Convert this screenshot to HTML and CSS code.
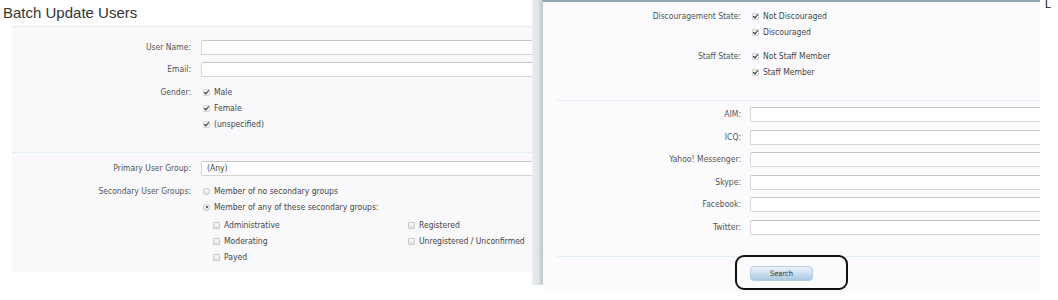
FILE: index.html
```html
<!DOCTYPE html>
<html lang="en">
<head>
  <meta charset="UTF-8">
  <meta name="viewport" content="width=device-width, initial-scale=1.0">
  <title>Batch Update Users</title>
  <link rel="stylesheet" href="styles.css">
</head>
<body>
  <div class="screen">

    <div class="left-pane">
      <h1 class="title">Batch Update Users</h1>

      <div class="section">
        <div class="row">
          <label class="row-label">User Name:</label>
          <div class="controls"><input type="text" class="text-input"></div>
        </div>
        <div class="row">
          <label class="row-label">Email:</label>
          <div class="controls"><input type="text" class="text-input"></div>
        </div>
        <div class="row">
          <div class="row-label opt-label">Gender:</div>
          <div class="controls">
            <div class="opt"><span class="cb checked"></span>Male</div>
            <div class="opt"><span class="cb checked"></span>Female</div>
            <div class="opt"><span class="cb checked"></span>(unspecified)</div>
          </div>
        </div>
      </div>

      <div class="section section-second">
        <div class="row">
          <label class="row-label">Primary User Group:</label>
          <div class="controls"><div class="select-box">(Any)</div></div>
        </div>
        <div class="row">
          <div class="row-label opt-label">Secondary User Groups:</div>
          <div class="controls">
            <div class="opt"><span class="radio"></span>Member of no secondary groups</div>
            <div class="opt"><span class="radio selected"></span>Member of any of these secondary groups:</div>
            <div class="group-grid">
              <div class="opt"><span class="cb"></span>Administrative</div>
              <div class="opt"><span class="cb"></span>Registered</div>
              <div class="opt"><span class="cb"></span>Moderating</div>
              <div class="opt"><span class="cb"></span>Unregistered / Unconfirmed</div>
              <div class="opt"><span class="cb"></span>Payed</div>
            </div>
          </div>
        </div>
      </div>
    </div>

    <div class="pane-bar"></div>

    <div class="right-pane">
      <div class="section-r">
        <div class="row">
          <div class="row-label opt-label">Discouragement State:</div>
          <div class="controls">
            <div class="opt"><span class="cb checked"></span>Not Discouraged</div>
            <div class="opt"><span class="cb checked"></span>Discouraged</div>
          </div>
        </div>
        <div class="row">
          <div class="row-label opt-label">Staff State:</div>
          <div class="controls">
            <div class="opt"><span class="cb checked"></span>Not Staff Member</div>
            <div class="opt"><span class="cb checked"></span>Staff Member</div>
          </div>
        </div>
      </div>

      <div class="section-r section-im">
        <div class="row">
          <label class="row-label">AIM:</label>
          <div class="controls"><input type="text" class="text-input"></div>
        </div>
        <div class="row">
          <label class="row-label">ICQ:</label>
          <div class="controls"><input type="text" class="text-input"></div>
        </div>
        <div class="row">
          <label class="row-label">Yahoo! Messenger:</label>
          <div class="controls"><input type="text" class="text-input"></div>
        </div>
        <div class="row">
          <label class="row-label">Skype:</label>
          <div class="controls"><input type="text" class="text-input"></div>
        </div>
        <div class="row">
          <label class="row-label">Facebook:</label>
          <div class="controls"><input type="text" class="text-input"></div>
        </div>
        <div class="row">
          <label class="row-label">Twitter:</label>
          <div class="controls"><input type="text" class="text-input"></div>
        </div>
      </div>

      <div class="submit-row">
        <div class="submit-wrap">
          <button class="search-btn">Search</button>
          <div class="marker"></div>
        </div>
      </div>
    </div>

    <div class="edge"><span class="edge-letter">L</span></div>
  </div>
</body>
</html>
```

FILE: styles.css
```css
html, body {
  margin: 0;
  padding: 0;
  background: #fff;
}
body {
  width: 1058px;
  height: 300px;
  overflow: hidden;
  font-family: "DejaVu Sans Condensed", "DejaVu Sans", sans-serif;
  font-size: 8.5px;
  color: #555;
}
.screen {
  display: flex;
  align-items: flex-start;
}

/* left window */
.left-pane {
  width: 532px;
}
.title {
  margin: 0;
  padding-left: 3px;
  height: 26px;
  font-family: "Liberation Sans", Arial, sans-serif;
  font-size: 15px;
  font-weight: normal;
  color: #333;
  line-height: 26px;
}
.section {
  margin-left: 12px;
  background: #f9f9fb;
  border-top: 1px solid #e2efef;
  padding: 13px 0 20px;
  display: flex;
  flex-direction: column;
  gap: 7px;
}
.section-second {
  padding: 8px 0 7px;
}
.row {
  display: grid;
  grid-template-columns: 179px 1fr;
  column-gap: 10px;
}
.row-label {
  text-align: right;
  line-height: 15px;
  color: #545454;
}
.opt-label {
  line-height: 16px;
}
.controls {
  min-width: 0;
}
.text-input,
.select-box {
  display: block;
  box-sizing: border-box;
  width: 100%;
  height: 15px;
  margin: 0;
  padding: 0 5px;
  border: 1px solid #d4d4d4;
  border-top-color: #c6c6c6;
  border-right: none;
  border-radius: 2px 0 0 2px;
  background: #fff;
  font: inherit;
  color: #444;
  line-height: 13px;
}
.opt {
  display: flex;
  align-items: center;
  height: 16px;
  color: #454545;
  white-space: nowrap;
}
.cb,
.radio {
  flex: none;
  box-sizing: border-box;
  width: 7px;
  height: 7px;
  margin: 0 4px 0 2px;
  position: relative;
}
.cb {
  border: 1px solid #c8c8c8;
  border-radius: 1px;
  background: linear-gradient(#fbfbfb, #e2e2e2);
}
.cb.checked {
  border-color: #d6d6d6;
  background: #f2f2f2;
}
.cb.checked::after {
  content: "";
  position: absolute;
  left: 1px;
  top: -1px;
  width: 2px;
  height: 4px;
  border: solid #333;
  border-width: 0 1.5px 1.5px 0;
  transform: rotate(40deg);
}
.radio {
  border: 1px solid #c4c4c4;
  border-radius: 50%;
  background: linear-gradient(#fdfdfd, #e6e6e6);
}
.radio.selected::after {
  content: "";
  position: absolute;
  left: 1.5px;
  top: 1.5px;
  width: 2px;
  height: 2px;
  border-radius: 50%;
  background: #333;
}
.group-grid {
  display: grid;
  grid-template-columns: 195px 1fr;
  margin: 2px 0 0 10px;
}

/* splitter between the two windows */
.pane-bar {
  flex: none;
  width: 11px;
  height: 285px;
  background: linear-gradient(to right, #eceff0, #dde2e3 60%, #b9c5c8);
}

/* right window */
.right-pane {
  width: 497px;
  height: 290px;
  background: #fbfbfd;
  border-top: 2px solid #8ea7b0;
}
.section-r {
  margin-left: 14px;
  padding: 6px 0 20px;
  display: flex;
  flex-direction: column;
  gap: 8px;
}
.section-r .row {
  grid-template-columns: 184px 1fr;
  column-gap: 9px;
}
.section-im {
  border-top: 1px solid #e2efef;
  padding: 6px 0 21px;
  gap: 7.5px;
}
.submit-row {
  margin-left: 14px;
  border-top: 1px solid #e2efef;
  padding: 9px 0 0 193px;
}
.submit-wrap {
  position: relative;
  display: inline-block;
}
.search-btn {
  display: block;
  width: 63px;
  height: 15px;
  padding: 0;
  border: 1px solid #b4cde2;
  border-radius: 4px;
  background: linear-gradient(#eef4fa, #c4d9ec 60%, #a9c7e3);
  font: inherit;
  font-size: 7.5px;
  color: #333;
  cursor: pointer;
}
.marker {
  position: absolute;
  left: -15px;
  top: -11px;
  width: 113px;
  height: 35px;
  box-sizing: border-box;
  border: 2.5px solid #111;
  border-radius: 9px;
}

.edge {
  flex: 1;
  padding-left: 5px;
}
.edge-letter {
  display: block;
  font-family: "Liberation Sans", Arial, sans-serif;
  font-size: 11px;
  line-height: 9px;
  color: #111;
}
```
